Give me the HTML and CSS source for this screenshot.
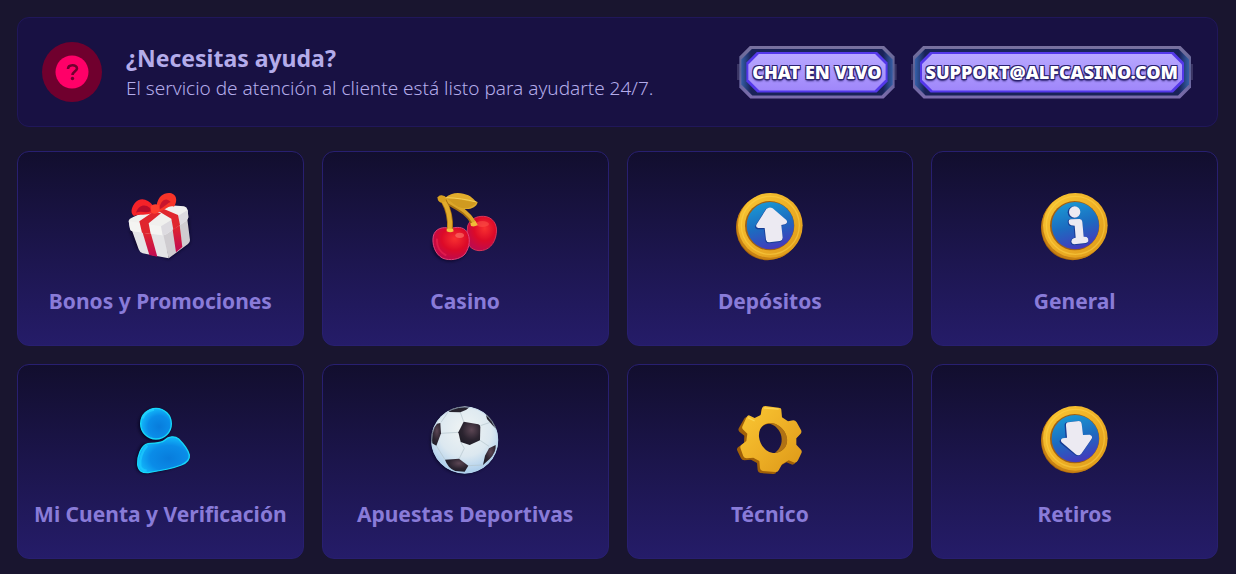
FILE: index.html
```html
<!DOCTYPE html>
<html lang="es">
<head>
    <meta charset="UTF-8">
    <meta name="viewport" content="width=device-width, initial-scale=1.0">
    <title>Centro de ayuda</title>
    <link rel="stylesheet" href="styles.css">
</head>
<body>
    <!-- Shared gradients -->
    <svg class="defs" width="0" height="0" aria-hidden="true">
        <defs>
            <linearGradient id="gold" x1="0" y1="0" x2="1" y2="1">
                <stop offset="0" stop-color="#fac834"/>
                <stop offset="0.5" stop-color="#eeb026"/>
                <stop offset="1" stop-color="#dc9818"/>
            </linearGradient>
            <linearGradient id="disc" x1="0.3" y1="0" x2="0.6" y2="1">
                <stop offset="0" stop-color="#1a98d4"/>
                <stop offset="0.5" stop-color="#1c6cc0"/>
                <stop offset="1" stop-color="#4638bc"/>
            </linearGradient>
            <linearGradient id="ribbon" x1="0" y1="0" x2="0" y2="1">
                <stop offset="0" stop-color="#e0262c"/>
                <stop offset="1" stop-color="#c00a54"/>
            </linearGradient>
            <radialGradient id="cherry" cx="0.6" cy="0.35" r="0.65">
                <stop offset="0" stop-color="#f83030"/>
                <stop offset="0.55" stop-color="#dc0a28"/>
                <stop offset="1" stop-color="#c00a4c"/>
            </radialGradient>
            <radialGradient id="person" cx="0.6" cy="0.6" r="0.6">
                <stop offset="0" stop-color="#087cdc"/>
                <stop offset="0.6" stop-color="#0a8ce8"/>
                <stop offset="1" stop-color="#12b8fa"/>
            </radialGradient>
            <radialGradient id="ball" cx="0.5" cy="0.35" r="0.65">
                <stop offset="0" stop-color="#f0f4f4"/>
                <stop offset="0.6" stop-color="#dce8f0"/>
                <stop offset="1" stop-color="#a8ccec"/>
            </radialGradient>
            <radialGradient id="patch" cx="0.6" cy="0.35" r="0.7">
                <stop offset="0" stop-color="#5c4654"/>
                <stop offset="0.6" stop-color="#2c2430"/>
                <stop offset="1" stop-color="#1e1c26"/>
            </radialGradient>
            <clipPath id="ball-clip"><circle cx="149" cy="135" r="101"/></clipPath>
            <filter id="soft" x="-20%" y="-20%" width="140%" height="140%"><feGaussianBlur stdDeviation="5"/></filter>
            <g id="coin">
                <ellipse cx="143" cy="143" rx="95" ry="98" fill="#a8640a"/>
                <ellipse cx="146" cy="141" rx="97" ry="98" fill="#c88214"/>
                <circle cx="151" cy="136" r="97" fill="url(#gold)"/>
                <circle cx="151" cy="136" r="87" fill="none" stroke="#ffd64a" stroke-width="4" opacity="0.5"/>
                <circle cx="149" cy="137" r="74" fill="#a06014"/>
                <circle cx="151" cy="137" r="71" fill="url(#disc)"/>
            </g>
        </defs>
    </svg>

    <main class="help">
        <section class="support">
            <svg class="support-icon" viewBox="0 0 60 60" aria-hidden="true">
                <circle cx="30" cy="30" r="30" fill="#70002e"/>
                <circle cx="30" cy="30" r="16.5" fill="#ff0068"/>
                <path d="M26 27C26 22 35 22 35 26.500C35 29 30.500 29.500 30.500 33" fill="none" stroke="#70002e" stroke-width="2.600"/>
                <circle cx="30.500" cy="36.500" r="1.700" fill="#70002e"/>
            </svg>
            <div class="support-text">
                <h1>¿Necesitas ayuda?</h1>
                <p>El servicio de atención al cliente está listo para ayudarte 24/7.</p>
            </div>
            <div class="support-actions">
                <button type="button" class="btn"><span class="btn-frame"><span class="btn-inner"><span class="btn-glow"><span class="btn-face">CHAT EN VIVO</span></span></span></span></button>
                <a href="mailto:support@alfcasino.com" class="btn"><span class="btn-frame"><span class="btn-inner"><span class="btn-glow"><span class="btn-face">SUPPORT@ALFCASINO.COM</span></span></span></span></a>
            </div>
        </section>

        <nav class="topics">
            <a href="#bonos" class="topic">
                <svg class="topic-icon" viewBox="0 0 300 270" aria-hidden="true">
                    <path d="M60 150L80 205L176 238L240 190L235 110Z" fill="#08061e" opacity="0.7" filter="url(#soft)"/>
                    <path d="M64 146L165 162L176 235L98 220Q89 217 86 208Z" fill="#e4e4e6"/>
                    <path d="M160 164L232 118L240 180Q240 188 234 192L176 235Z" fill="#cfccd0"/>
                    <path d="M56 122Q58 116 64 114L140 77Q150 73 160 74L222 79Q231 81 233 90L235 112Q234 119 228 123L170 162Q162 167 152 165L68 154Q61 152 60 146Z" fill="#f0f0ee"/>
                    <path d="M56 124L153 139L158 166L68 154Q61 152 60 146Z" fill="#f4f4f2"/>
                    <path d="M153 139L233 90L235 112Q234 119 228 123L170 162Q164 166 158 166Z" fill="#dddbe0"/>
                    <path d="M88 124L132 94L153 100L116 130L122 162L96 158Z" fill="#e0262e"/>
                    <path d="M98 158L123 162L142 230L118 225Z" fill="url(#ribbon)"/>
                    <path d="M146 94L160 86L204 105L210 135L190 149L184 116Z" fill="#e0262e"/>
                    <path d="M188 149L209 136L217 201L198 217Z" fill="url(#ribbon)"/>
                    <path d="M130 78C112 54 88 52 74 70C62 86 62 102 72 108C90 100 108 108 128 98Z" fill="#f42228"/>
                    <path d="M120 84C104 70 86 76 78 98C92 92 108 100 122 94Z" fill="#b80c2a"/>
                    <path d="M140 76C144 48 164 36 184 40C202 46 202 66 192 80C176 74 162 94 142 96Z" fill="#f83428"/>
                    <path d="M149 82C152 60 170 50 182 66C174 68 164 80 149 88Z" fill="#c8142c"/>
                    <path d="M122 78Q134 68 147 76L149 94Q138 106 124 98Z" fill="#ff4030"/>
                </svg>
                <span class="topic-name">Bonos y Promociones</span>
            </a>
            <a href="#casino" class="topic">
                <svg class="topic-icon" viewBox="0 0 300 270" aria-hidden="true">
                    <ellipse cx="105" cy="196" rx="54" ry="48" fill="#08061e" opacity="0.7" filter="url(#soft)"/>
                    <path d="M158 138C164 118 184 108 206 109C232 110 248 132 244 160C240 192 220 213 192 212C168 210 156 194 155 172Z" fill="url(#cherry)" stroke="#d83458" stroke-width="3"/>
                    <ellipse cx="202" cy="132" rx="20" ry="9" fill="#ff5a4c" opacity="0.5"/>
                    <path d="M84 54C108 80 150 84 176 130" fill="none" stroke="#a87010" stroke-width="15"/>
                    <path d="M84 52C110 76 152 82 178 128" fill="none" stroke="#dca62a" stroke-width="11"/>
                    <path d="M166 130L182 124L188 135Q178 142 168 138Z" fill="#f0bc38"/>
                    <path d="M106 146C124 140 144 140 155 154C168 174 164 202 150 222C136 238 104 244 82 234C60 222 50 192 55 168C60 146 84 138 106 146Z" fill="url(#cherry)" stroke="#e04478" stroke-width="3"/>
                    <ellipse cx="134" cy="166" rx="13" ry="8" fill="#ff7a6c" opacity="0.6"/>
                    <path d="M66 176C64 200 76 218 94 226" fill="none" stroke="#ff3460" stroke-width="6" opacity="0.4"/>
                    <path d="M86 62C98 84 108 112 105 150" fill="none" stroke="#a87010" stroke-width="18"/>
                    <path d="M84 60C100 84 108 112 104 150" fill="none" stroke="#e2ac2c" stroke-width="13"/>
                    <path d="M95 146L114 146L116 154Q106 160 95 154Z" fill="#f4c342"/>
                    <path d="M68 52Q72 45 80 46L88 48L92 64L78 68Q66 64 68 52Z" fill="#d8a020"/>
                    <path d="M90 54C110 34 140 36 160 46C176 54 180 66 188 66C184 84 164 90 142 86C118 82 108 62 90 54Z" fill="#e0ac2c"/>
                    <path d="M92 54C130 54 150 64 186 67C172 84 152 88 138 83C116 78 108 62 92 54Z" fill="#d09a20"/>
                    <path d="M94 53C126 54 154 58 184 66" fill="none" stroke="#f4d058" stroke-width="3"/>
                </svg>
                <span class="topic-name">Casino</span>
            </a>
            <a href="#depositos" class="topic">
                <svg class="topic-icon" viewBox="0 0 300 270" aria-hidden="true">
                    <use href="#coin"/>
                    <path d="M137 88Q147 79 157 86L198 121Q205 130 195 134L184 137L188 175Q188 184 179 186L147 190Q138 190 136 182L132 148L112 148Q102 145 107 136Z" fill="#173c94"/>
                    <path d="M139 87Q148 79 158 85L199 120Q205 129 195 133L184 135L188 173Q188 181 180 183L148 187Q140 187 138 179L134 144L115 144Q105 142 110 133Z" fill="#eceaf2"/>
                </svg>
                <span class="topic-name">Depósitos</span>
            </a>
            <a href="#general" class="topic">
                <svg class="topic-icon" viewBox="0 0 300 270" aria-hidden="true">
                    <use href="#coin"/>
                    <g fill="#173c94">
                        <circle cx="146" cy="97" r="18"/>
                        <path d="M128 126Q127 119 134 118L164 117Q171 118 172 125L176 171L186 172Q191 178 189 187L184 191L144 196Q137 194 136 186Q136 178 144 175L149 173L146 139L135 138Q129 135 128 126Z"/>
                    </g>
                    <g fill="#eceaf2">
                        <circle cx="149" cy="96" r="17"/>
                        <path d="M131 126Q130 119 137 118L164 117Q171 118 172 125L176 170L185 171Q191 174 190 183Q189 188 182 189L147 193Q140 192 139 185Q139 177 146 175L152 173L149 137L138 136Q132 134 131 126Z"/>
                    </g>
                </svg>
                <span class="topic-name">General</span>
            </a>
            <a href="#cuenta" class="topic">
                <svg class="topic-icon" viewBox="0 -6 300 270" aria-hidden="true">
                    <g fill="#04041a" opacity="0.8" filter="url(#soft)">
                        <circle cx="134" cy="90" r="48"/>
                        <path d="M100 146Q80 160 78 210Q80 236 106 236L170 224L220 206V160Z"/>
                    </g>
                    <circle cx="138" cy="86" r="46" fill="url(#person)" stroke="#16d8fa" stroke-width="4"/>
                    <path d="M98 70Q106 48 132 44" fill="none" stroke="#28d8ff" stroke-width="7" opacity="0.6"/>
                    <path d="M114 146C134 142 152 148 164 136C176 124 194 122 206 132C220 146 234 164 238 180C240 196 228 204 214 210C184 222 146 228 114 233C96 234 84 226 83 208C82 184 92 152 114 146Z" fill="url(#person)" stroke="#16d8fa" stroke-width="4"/>
                    <path d="M112 152C96 168 88 194 91 214Q96 226 110 227" fill="none" stroke="#20d0ff" stroke-width="7" opacity="0.6"/>
                </svg>
                <span class="topic-name">Mi Cuenta y Verificación</span>
            </a>
            <a href="#apuestas" class="topic">
                <svg class="topic-icon" viewBox="0 -6 300 270" aria-hidden="true">
                    <circle cx="145" cy="140" r="98" fill="#05041a" opacity="0.7" filter="url(#soft)"/>
                    <g clip-path="url(#ball-clip)">
                        <circle cx="149" cy="135" r="102" fill="url(#ball)"/>
                        <g fill="none" stroke="#b4c4cc" stroke-width="2">
                            <path d="M146 80L136 52M196 92L226 82M195 136L222 154M137 141L148 160L132 192M130 112L78 115M160 212L204 210M78 82L100 50M90 194L64 152"/>
                        </g>
                        <path d="M146 80L190 88Q196 90 196 96L195 136L164 150L137 141L130 112Z" fill="url(#patch)"/>
                        <path d="M100 46Q130 30 164 36L154 44L136 52L102 51Z" fill="#27232e"/>
                        <path d="M66 86L76 84L78 115L64 152L50 144Q40 116 66 86Z" fill="url(#patch)"/>
                        <path d="M90 194L132 191L160 212L149 230L120 228Q98 218 90 194Z" fill="url(#patch)"/>
                        <path d="M212 56Q238 72 246 104L232 90L216 72Z" fill="#27232e"/>
                        <path d="M222 160L242 150Q244 172 224 192L204 210L210 182Z" fill="url(#patch)"/>
                        <circle cx="149" cy="135" r="99" fill="none" stroke="#b8d4ec" stroke-width="3" opacity="0.6"/>
                    </g>
                </svg>
                <span class="topic-name">Apuestas Deportivas</span>
            </a>
            <a href="#tecnico" class="topic">
                <svg class="topic-icon" viewBox="0 -6 300 270" aria-hidden="true">
                    <path transform="translate(-7 6)" fill="#a06008" fill-rule="evenodd" d="M132 36Q134 32 140 33L176 38Q184 38 184 45L186 67L204 79L220 76Q226 76 230 82L243 105Q246 111 242 116L229 130L229 149L243 164Q247 169 244 175L234 196Q231 203 224 203L206 196L186 208L177 224Q174 232 166 231L128 228Q121 227 120 220L118 198L100 188L80 190Q73 190 70 184L59 161Q56 154 62 150L79 138L80 116L65 104Q60 99 64 92L79 66Q82 59 90 62L108 71L128 60Z
                        M156 80C132 80 118 102 122 126C125 152 142 170 166 170C188 168 202 150 199 126C195 102 178 80 156 80Z"/>
                    <path fill="url(#gold)" fill-rule="evenodd" d="M126 40Q128 33 136 33L176 38Q184 38 184 45L186 67L204 79L220 76Q226 76 230 82L243 105Q246 111 242 116L229 130L229 149L243 164Q247 169 244 175L234 196Q231 203 224 203L206 196L186 208L177 224Q174 232 166 231L128 228Q121 227 120 220L118 198L100 188L80 190Q73 190 70 184L62 161Q59 154 64 150L79 138L82 116L70 104Q64 99 68 92L80 66Q84 59 90 62L104 69L122 60Z
                        M151 84C128 84 115 102 117 126C120 152 140 174 165 174C188 172 204 154 201 130C197 102 172 84 151 84Z"/>
                    <path d="M151 84C172 84 197 102 201 130C204 154 188 172 165 174C180 162 188 146 184 124C180 104 166 90 144 85Z" fill="#b07214"/>
                    <path d="M132 39L176 42M84 68L104 78" fill="none" stroke="#ffe060" stroke-width="4" opacity="0.7"/>
                </svg>
                <span class="topic-name">Técnico</span>
            </a>
            <a href="#retiros" class="topic">
                <svg class="topic-icon" viewBox="0 0 300 270" aria-hidden="true">
                    <use href="#coin"/>
                    <path d="M119 98Q118 89 127 88L162 84Q169 85 170 92L173 127L194 126Q204 130 200 139L169 184Q160 192 151 187L106 151Q100 143 109 139L122 136Z" fill="#173c94"/>
                    <path d="M123 98Q122 89 130 88L162 84Q169 85 170 92L174 126L194 125Q204 128 200 137L169 182Q161 190 152 184L110 148Q104 140 113 136L126 134Z" fill="#eceaf2"/>
                </svg>
                <span class="topic-name">Retiros</span>
            </a>
        </nav>
    </main>
</body>
</html>
```
FILE: styles.css
```css
* {
    box-sizing: border-box;
}

body {
    margin: 0;
    background-color: #19152f;
    color: #b4acea;
    font-family: "Noto Sans", "Open Sans", sans-serif;
}

.defs {
    position: absolute;
}

.help {
    padding: 17px 18px 17px 17px;
}

/* Support bar */
.support {
    display: flex;
    align-items: center;
    padding: 24px;
    background-color: #181143;
    border: 1px solid #20175a;
    border-radius: 12px;
}

.support-icon {
    width: 60px;
    height: 60px;
    flex: none;
}

.support-text {
    flex: 1;
    margin-left: 24px;
}

.support-text h1 {
    margin: 0;
    font-size: 23px;
    line-height: 32px;
    font-weight: 700;
}

.support-text p {
    margin: 0;
    font-size: 19px;
    line-height: 28px;
    font-weight: 300;
}

.support-actions {
    display: flex;
    gap: 14px;
}

/* Framed buttons, each layer is a chamfered box inside the previous one */
.btn {
    display: block;
    padding: 0 2px;
    border: none;
    background: linear-gradient(#3a3564, #3a3564) center / 100% 16px no-repeat;
    color: #fff;
    font-family: "Noto Sans", sans-serif;
    font-size: 18px;
    line-height: 37px;
    font-weight: 900;
    text-align: center;
    text-decoration: none;
    cursor: pointer;
}

.btn span {
    display: block;
}

.btn-frame,
.btn-inner,
.btn-glow,
.btn-face {
    clip-path: polygon(11px 0, calc(100% - 11px) 0, 100% 11px, 100% calc(100% - 11px), calc(100% - 11px) 100%, 11px 100%, 0 calc(100% - 11px), 0 11px);
}

.btn-frame {
    padding: 3px 2px;
    background: linear-gradient(#78719f, #5c6296 45%, #7c6cab);
}

.btn-inner {
    padding: 3px 5px;
    background: linear-gradient(90deg, #3560a8, #192258 10px, #192258 calc(100% - 10px), #3560a8);
}

.btn-glow {
    padding: 2px;
    background-color: #5438ea;
}

.btn-face {
    padding: 0 4px;
    background: linear-gradient(#b8a8ff, #9f86fa);
    text-shadow: 1px 1px 0 #2b2270, -1px 1px 0 #2b2270, 1px -1px 0 #2b2270, -1px -1px 0 #2b2270, 0 2px 2px #2b2270;
}

/* Topic cards */
.topics {
    display: grid;
    grid-template-columns: repeat(4, 1fr);
    gap: 18px;
    margin-top: 24px;
}

.topic {
    display: flex;
    flex-direction: column;
    align-items: center;
    gap: 16px;
    padding: 28px 8px 29px;
    background: linear-gradient(#120e2e, #251c69) border-box;
    border: 1px solid #281f70;
    border-radius: 12px;
    color: #897bd8;
    text-decoration: none;
}

.topic:hover {
    border-color: #4a3cb0;
}

.topic-icon {
    width: 100px;
    height: 90px;
}

.topic-name {
    font-size: 21px;
    line-height: 30px;
    font-weight: 700;
    white-space: nowrap;
}
```
